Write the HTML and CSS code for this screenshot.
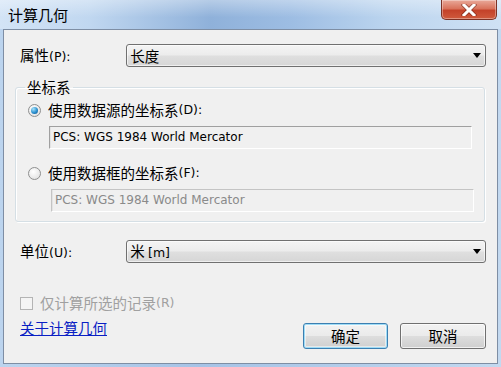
FILE: index.html
```html
<!DOCTYPE html>
<html lang="zh-CN">
<head>
<meta charset="UTF-8" />
<title>计算几何</title>
<link rel="stylesheet" href="styles.css">
</head>
<body>
<div class="window">
  <div class="titlebar">
    <span class="title">计算几何</span>
    <button class="close" aria-label="关闭">
      <svg width="16" height="12" viewBox="0 0 16 12">
        <path d="M3 1 L13 11 M13 1 L3 11" stroke="#5a1a10" stroke-width="4.5" stroke-linecap="square" opacity="0.55"/>
        <path d="M3 1 L13 11 M13 1 L3 11" stroke="#ffffff" stroke-width="3" stroke-linecap="square"/>
      </svg>
    </button>
  </div>

  <div class="client">
    <div class="row prop">
      <label class="lbl">属性<span class="k">(P):</span></label>
      <div class="combo"><span>长度</span><i class="arrow"></i></div>
    </div>

    <fieldset class="group">
      <legend>坐标系</legend>
      <div class="radio-row"><span class="radio on"></span>使用数据源的坐标系<span class="k">(D):</span></div>
      <div class="field">PCS: WGS 1984 World Mercator</div>
      <div class="radio-row second"><span class="radio"></span>使用数据框的坐标系<span class="k">(F):</span></div>
      <div class="field off">PCS: WGS 1984 World Mercator</div>
    </fieldset>

    <div class="row unit">
      <label class="lbl">单位<span class="k">(U):</span></label>
      <div class="combo"><span>米 <span class="k">[m]</span></span><i class="arrow"></i></div>
    </div>

    <div class="footer">
      <div class="left">
        <div class="check-row"><span class="check"></span>仅计算所选的记录<span class="k">(R)</span></div>
        <a class="about" href="#">关于计算几何</a>
      </div>
      <div class="buttons">
        <button class="btn default">确定</button>
        <button class="btn">取消</button>
      </div>
    </div>
  </div>
</div>
</body>
</html>
```

FILE: styles.css
```css
body {
  margin: 0;
  font-family: "Noto Sans CJK SC", sans-serif;
  font-size: 14.5px;
  color: #000;
}

.window {
  width: 501px;
  height: 367px;
  display: flex;
  flex-direction: column;
  background: linear-gradient(to right, #bcd4ee, #a6c3e6 40%, #b3cdea 70%, #c3d9f0);
  overflow: hidden;
}

.titlebar {
  height: 29px;
  display: flex;
  justify-content: space-between;
  align-items: flex-start;
  padding: 0 4px 0 8px;
  background:
    linear-gradient(to bottom, rgba(255,255,255,0.35), rgba(255,255,255,0) 60%),
    linear-gradient(to right, #d3e4f6 0%, #c0d7f0 18%, #8fb1da 42%, #9dbde3 58%, #bcd5ef 78%, #cfe1f4 100%);
}

.title {
  align-self: center;
  line-height: 18px;
  font-size: 15px;
  margin-top: 1px;
}

.close {
  width: 56px;
  height: 20px;
  padding: 0;
  border: 1px solid #7b3226;
  border-top: none;
  border-radius: 0 0 5px 5px;
  background: linear-gradient(to bottom, #e9a99a 0%, #d9735c 45%, #c4422a 55%, #cf5a3d 100%);
  box-shadow: inset 0 0 0 1px rgba(255,255,255,0.35);
  display: flex;
  align-items: center;
  justify-content: center;
}

.client {
  flex: 1;
  margin: 0 3px 3px;
  border: 1px solid #7e8ea4;
  background: #f0f0f0;
  display: flex;
  flex-direction: column;
}

.k {
  font-family: "DejaVu Sans", sans-serif;
  font-size: 12.5px;
}

.row {
  display: flex;
  align-items: center;
  padding: 0 11px 0 16px;
}

.prop {
  margin-top: 14px;
}

.unit {
  margin-top: 18px;
}

.lbl {
  width: 107px;
  line-height: 18px;
}

.combo {
  width: 357px;
  height: 21px;
  border: 1px solid #707070;
  border-radius: 3px;
  background: linear-gradient(to bottom, #f4f4f4 0%, #ececec 48%, #dfdfdf 52%, #d6d6d6 100%);
  box-shadow: inset 0 0 0 1px rgba(255,255,255,0.6);
  display: flex;
  align-items: center;
  justify-content: space-between;
  padding: 0 0 0 3px;
  box-sizing: content-box;
  line-height: 18px;
}

.arrow {
  width: 0;
  height: 0;
  border-left: 4px solid transparent;
  border-right: 4px solid transparent;
  border-top: 5px solid #000;
  margin-right: 4px;
}

.group {
  margin: 11px 12px 0 11px;
  padding: 0 10px 9px 11px;
  border: 1px solid #d5dfe5;
  border-radius: 3px;
  box-shadow: inset 1px 1px 0 #fff, 1px 1px 0 #fff;
  min-width: 0;
}

.group legend {
  padding: 0 2px;
  margin-left: -2px;
  line-height: 18px;
}

.radio-row {
  display: flex;
  align-items: center;
  line-height: 18px;
  margin-top: 5px;
  padding-left: 1px;
}

.radio-row.second {
  margin-top: 15px;
}

.radio {
  width: 11px;
  height: 11px;
  border: 1px solid #8e8f8f;
  border-radius: 50%;
  background: radial-gradient(circle at 40% 35%, #ffffff, #dcdcdc);
  margin-right: 7px;
  display: flex;
  align-items: center;
  justify-content: center;
}

.radio.on::after {
  content: "";
  width: 7px;
  height: 7px;
  border-radius: 50%;
  background: radial-gradient(circle at 35% 30%, #a6e3fb, #2a8fcf 55%, #0c4f86);
}

.field {
  width: 418px;
  height: 21px;
  margin: 7px 0 0 22px;
  padding-left: 3px;
  border: 1px solid;
  border-color: #a0a0a0 #ffffff #ffffff #a0a0a0;
  box-shadow: inset 1px 0 0 #e3e3e3;
  font-family: "DejaVu Sans", sans-serif;
  font-size: 12px;
  line-height: 21px;
  box-sizing: content-box;
}

.field.off {
  margin-left: 24px;
  color: #8a8a8a;
  border-color: #c4c4c4 #ffffff #ffffff #c4c4c4;
}

.footer {
  display: flex;
  justify-content: space-between;
  align-items: flex-start;
  padding: 0 11px 0 16px;
  margin-top: 31px;
}

.check-row {
  display: flex;
  align-items: center;
  line-height: 18px;
  color: #a0a0a0;
}

.check {
  width: 11px;
  height: 11px;
  border: 1px solid #b4b4b4;
  background: #f4f4f4;
  margin-right: 7px;
}

.about {
  display: block;
  margin-top: 7px;
  line-height: 18px;
  color: #0a1fc4;
  text-decoration: underline;
}

.buttons {
  display: flex;
  gap: 12px;
  margin-top: 29px;
}

.btn {
  width: 86px;
  height: 26px;
  padding: 0;
  border: 1px solid #707070;
  border-radius: 3px;
  background: linear-gradient(to bottom, #f2f2f2 0%, #ebebeb 48%, #dddddd 52%, #cfcfcf 100%);
  box-shadow: inset 0 0 0 1px rgba(255,255,255,0.7);
  font-family: "Noto Sans CJK SC", sans-serif;
  font-size: 14.5px;
  line-height: 22px;
  color: #000;
}

.btn.default {
  width: 85px;
  border-color: #3c7fb1;
  box-shadow: inset 0 0 0 1px #9fdcf6, inset 0 0 0 2px rgba(255,255,255,0.5);
}
```
